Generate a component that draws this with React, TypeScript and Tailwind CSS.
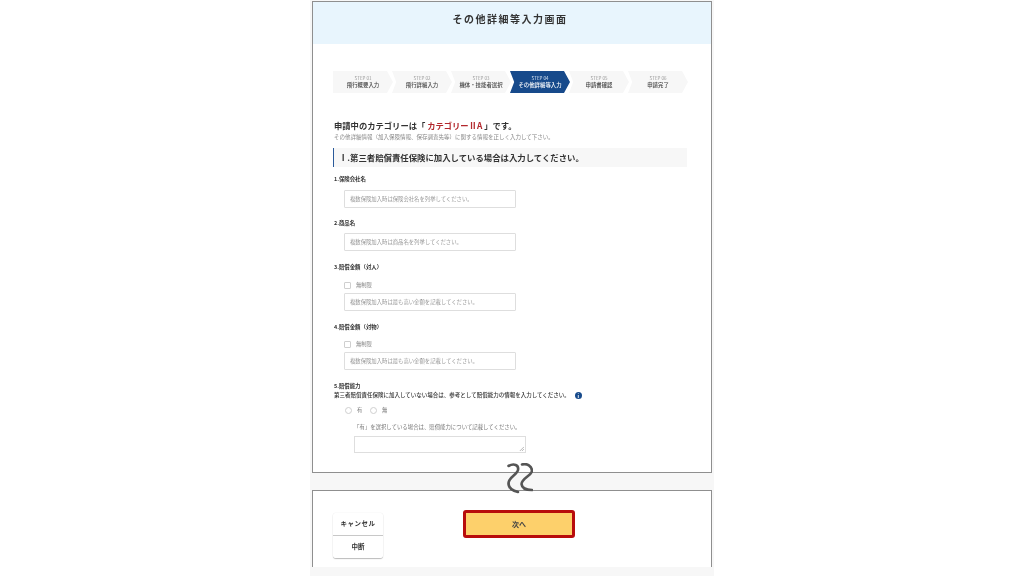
const font = "font-['Noto_Sans_CJK_JP','Noto_Sans',sans-serif]";

const steps = [
  { no: "STEP 01", name: "飛行概要入力" },
  { no: "STEP 02", name: "飛行詳細入力" },
  { no: "STEP 03", name: "機体・技能者選択" },
  { no: "STEP 04", name: "その他詳細等入力", active: true },
  { no: "STEP 05", name: "申請書確認" },
  { no: "STEP 06", name: "申請完了" },
];

function Stepper() {
  return (
    <div className="flex mt-[27px] ml-[20px] w-[354px] h-[22px]">
      {steps.map((s, i) => (
        <div
          key={s.no}
          className={
            "w-[60px] shrink-0 -mr-px h-full flex flex-col items-center justify-center leading-none " +
            (i === 0
              ? "[clip-path:polygon(0_0,90%_0,100%_50%,90%_100%,0_100%)] "
              : "[clip-path:polygon(0_0,90%_0,100%_50%,90%_100%,0_100%,7%_50%)] ") +
            (s.active ? "bg-[#174a8b] text-white" : "bg-[#f7f7f7] text-[#444]")
          }
        >
          <span className={"text-[4.5px] mb-[2px] " + (s.active ? "text-[#dbe6f3]" : "text-[#999]")}>{s.no}</span>
          <span className="text-[5.4px] font-medium whitespace-nowrap">{s.name}</span>
        </div>
      ))}
    </div>
  );
}

function Label({ children, className = "" }: { children: React.ReactNode; className?: string }) {
  return <div className={"pl-px text-[5.4px] leading-[7px] font-bold text-[#333] " + className}>{children}</div>;
}

function TextBox({ text, className = "" }: { text: string; className?: string }) {
  return (
    <div className={"ml-[11px] w-[172px] h-[18px] border border-[#dedede] rounded-[1px] bg-white flex items-center pl-[5px] text-[5.35px] text-[#999] " + className}>
      {text}
    </div>
  );
}

function Unlimited({ className = "" }: { className?: string }) {
  return (
    <div className={"flex items-center ml-[11px] h-[7px] " + className}>
      <span className="w-[7px] h-[7px] border border-[#cfcfcf] rounded-[1px] bg-white" />
      <span className="ml-[5px] text-[5.3px] text-[#888]">無制限</span>
    </div>
  );
}

function Radio({ label }: { label: string }) {
  return (
    <div className="flex items-center w-[25px]">
      <span className="w-[7px] h-[7px] border border-[#cfcfcf] rounded-full bg-white" />
      <span className="ml-[5px] text-[5.3px] text-[#777]">{label}</span>
    </div>
  );
}

function Squiggle() {
  return (
    <svg viewBox="0 0 26 32" className="absolute left-[194px] -bottom-[23px] w-[26px] h-[32px]" fill="none" stroke="#555" strokeWidth="2.6" strokeLinecap="round">
      <path d="M1.5 3 C7 0 12 2 11 7 C10 12 1 14 1.5 21 C2 26 7 28 11 29" />
      <path d="M15 1.5 C20 0 25 3 25 8 C24 13 15 15 14.5 21 C15 26 20 27 25 27" />
    </svg>
  );
}

export default function App() {
  return (
    <div className={"w-[1024px] h-[576px] overflow-hidden bg-white " + font}>
      <div className="w-[404px] h-[576px] ml-[310px] bg-[#f7f7f7] pt-px px-[2px] blur-[0.5px]">
        <div className="relative h-[472px] border border-[#8f8f8f] bg-white">
          <div className="h-[42px] bg-[#e8f5fd] flex justify-center pt-[9px] pr-[4px]">
            <h1 className="text-[10px] leading-[16px] font-bold tracking-[1.5px] text-[#333]">その他詳細等入力画面</h1>
          </div>
          <Stepper />

          <div className="ml-[20px] w-[354px] mt-[26px]">
            <div className="pl-px text-[8.3px] leading-[12px] font-bold text-[#333]">
              申請中のカテゴリーは「 <span className="text-[#b3282d]">カテゴリーⅡA</span> 」です。
            </div>
            <div className="pl-px text-[5.5px] leading-[8px] text-[#888] mt-[2px]">
              その他詳細情報（加入保険情報、保存調査先等）に関する情報を正しく入力して下さい。
            </div>
            <div className="mt-[7px] h-[19px] bg-[#f7f7f7] border-l-[1.5px] border-[#2a5a9a] pl-[5px] flex items-center text-[8.4px] font-bold text-[#333] whitespace-nowrap">
              Ⅰ.第三者賠償責任保険に加入している場合は入力してください。
            </div>

            <Label className="mt-[9px]">1.保険会社名</Label>
            <TextBox className="mt-[7px]" text="複数保険加入時は保険会社名を列挙してください。" />
            <Label className="mt-[12px]">2.商品名</Label>
            <TextBox className="mt-[6px]" text="複数保険加入時は商品名を列挙してください。" />
            <Label className="mt-[13px]">3.賠償金額（対人）</Label>
            <Unlimited className="mt-[11px]" />
            <TextBox className="mt-[4px]" text="複数保険加入時は最も高い金額を記載してください。" />
            <Label className="mt-[13px]">4.賠償金額（対物）</Label>
            <Unlimited className="mt-[10px]" />
            <TextBox className="mt-[4px]" text="複数保険加入時は最も高い金額を記載してください。" />

            <Label className="mt-[13px]">5.賠償能力</Label>
            <div className="flex items-center pl-px mt-[2px] h-[7px]">
              <span className="text-[5.5px] font-medium text-[#333] whitespace-nowrap">第三者賠償責任保険に加入していない場合は、参考として賠償能力の情報を入力してください。</span>
              <span className="ml-[5px] w-[7px] h-[7px] rounded-full bg-[#174a8b] text-white text-[5px] leading-[7px] text-center font-bold">i</span>
            </div>
            <div className="flex ml-[12px] mt-[8px] h-[7px]">
              <Radio label="有" />
              <Radio label="無" />
            </div>
            <div className="ml-[21px] mt-[10px] text-[5.4px] leading-[7px] text-[#777] whitespace-nowrap">
              「有」を選択している場合は、賠償能力について記載してください。
            </div>
            <div className="relative ml-[21px] mt-[5px] w-[172px] h-[17px] border border-[#dedede] bg-white">
              <svg viewBox="0 0 6 6" className="absolute right-px bottom-px w-[5px] h-[5px]" stroke="#888" strokeWidth="0.7">
                <path d="M1 6 L6 1 M3.5 6 L6 3.5" />
              </svg>
            </div>
          </div>
          <Squiggle />
        </div>

        <div className="mt-[17px] h-[77px] border-x border-t border-[#8f8f8f] bg-white flex items-start pl-[20px]">
          <div className="mt-[22px] w-[50px] flex flex-col text-[6.5px] font-bold text-[#333] rounded-[3px] shadow-[0_1px_1px_#bbbbbb,0_0_1px_#d5d5d5]">
            <button className="h-[23px] bg-white rounded-t-[3px] border-b border-[#c8c8c8] tracking-[0.5px]">キャンセル</button>
            <button className="h-[22px] bg-white rounded-b-[3px]">中断</button>
          </div>
          <button className="ml-[80px] mt-[19px] w-[112px] h-[28px] bg-[#fdd06b] border-[3px] border-[#b80c0c] rounded-[3px] text-[7px] font-bold text-[#444]">
            次へ
          </button>
        </div>
      </div>
    </div>
  );
}
